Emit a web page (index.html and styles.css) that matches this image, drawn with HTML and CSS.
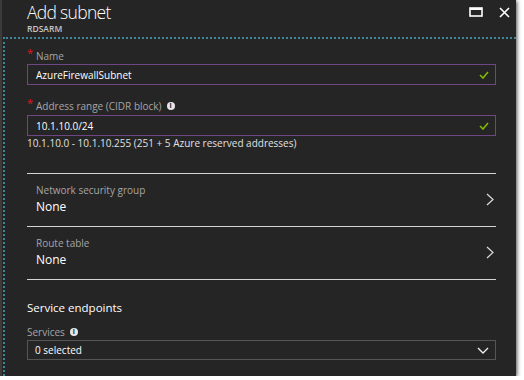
FILE: index.html
```html
<!DOCTYPE html>
<html lang="en">

<head>
    <meta charset="UTF-8">
    <link rel="stylesheet" href="styles.css">
</head>

<body>
    <div class="blade">
        <header class="blade-header">
            <div class="blade-titles">
                <h1 class="blade-title">Add subnet</h1>
                <div class="blade-subtitle">RDSARM</div>
            </div>
            <div class="blade-controls">
                <svg class="ctrl-icon" width="14" height="10" viewBox="0 0 14 10">
                    <rect x="1" y="1" width="12" height="8" fill="none" stroke="#fff" stroke-width="1.6"/>
                    <rect x="1" y="1" width="12" height="2" fill="#fff"/>
                </svg>
                <svg class="ctrl-icon" width="11" height="11" viewBox="0 0 11 11">
                    <path d="M1 1 L10 10 M10 1 L1 10" stroke="#fff" stroke-width="1.6"/>
                </svg>
            </div>
        </header>

        <div class="blade-body">
            <div class="field">
                <label class="field-label"><span class="required">*</span>Name</label>
                <div class="text-input is-valid">
                    <span>AzureFirewallSubnet</span>
                    <svg class="check" width="10" height="8" viewBox="0 0 10 8">
                        <path d="M1 4 L4 7 L9 1" fill="none" stroke="#7fba00" stroke-width="1.6"/>
                    </svg>
                </div>
            </div>

            <div class="field field-second">
                <label class="field-label"><span class="required">*</span>Address range (CIDR block)
                    <span class="info">i</span></label>
                <div class="text-input is-valid">
                    <span>10.1.10.0/24</span>
                    <svg class="check" width="10" height="8" viewBox="0 0 10 8">
                        <path d="M1 4 L4 7 L9 1" fill="none" stroke="#7fba00" stroke-width="1.6"/>
                    </svg>
                </div>
                <div class="field-hint">10.1.10.0 - 10.1.10.255 (251 + 5 Azure reserved addresses)</div>
            </div>

            <div class="picker-list">
                <div class="picker">
                    <div>
                        <div class="picker-label">Network security group</div>
                        <div class="picker-value">None</div>
                    </div>
                    <svg class="chevron" width="8" height="13" viewBox="0 0 8 13">
                        <path d="M1 1 L7 6.5 L1 12" fill="none" stroke="#ddd" stroke-width="1.2"/>
                    </svg>
                </div>
                <div class="picker">
                    <div>
                        <div class="picker-label">Route table</div>
                        <div class="picker-value">None</div>
                    </div>
                    <svg class="chevron" width="8" height="13" viewBox="0 0 8 13">
                        <path d="M1 1 L7 6.5 L1 12" fill="none" stroke="#ddd" stroke-width="1.2"/>
                    </svg>
                </div>
            </div>

            <h2 class="section-title">Service endpoints</h2>

            <div class="field">
                <label class="field-label field-label-plain">Services <span class="info">i</span></label>
                <div class="select-input">
                    <span>0 selected</span>
                    <svg class="caret" width="12" height="7" viewBox="0 0 12 7">
                        <path d="M1 1 L6 6 L11 1" fill="none" stroke="#eee" stroke-width="1.4"/>
                    </svg>
                </div>
            </div>
        </div>
    </div>
</body>

</html>
```

FILE: styles.css
```css
body {
    margin: 0;
    background-color: #fff;
    font-family: "Open Sans", "Noto Sans", sans-serif;
    color: #fff;
}

.blade {
    width: 516px;
    height: 376px;
    background-color: #252525;
    border-left: 2px solid #3b3b3b;
    box-sizing: border-box;
    box-shadow: 1px 1px 4px rgba(0, 0, 0, 0.7);
    display: flex;
    flex-direction: column;
}

.blade-header {
    height: 37px;
    display: flex;
    justify-content: space-between;
    padding: 0 6px 0 25px;
}

.blade-title {
    margin: 0;
    padding-top: 1px;
    font-size: 17.5px;
    font-weight: 300;
    letter-spacing: -0.7px;
    line-height: 23px;
}

.blade-subtitle {
    font-size: 8.5px;
    font-weight: 600;
    line-height: 9px;
    color: #c8c8c8;
}

.blade-controls {
    display: flex;
    gap: 16px;
    padding-top: 7px;
}

.blade-body {
    flex: 1;
    margin-left: 1px;
    border-left: 2px dotted #3d8799;
    border-top: 2px dotted #3d8799;
    padding: 10px 20px 0 22px;
}

.field-label {
    display: flex;
    align-items: center;
    font-size: 10px;
    line-height: 14px;
    color: #a6a6a6;
    margin-bottom: 1px;
}

.field-label-plain {
    margin-bottom: 1px;
}

.required {
    color: #e81123;
    font-size: 11px;
    width: 9px;
    margin-top: -6px;
}

.info {
    display: inline-flex;
    align-items: center;
    justify-content: center;
    width: 8px;
    height: 8px;
    margin-left: 5px;
    border-radius: 50%;
    background-color: #e6e6e6;
    color: #252525;
    font-size: 7px;
    font-weight: 700;
    line-height: 8px;
}

.field-second {
    margin-top: 14px;
}

.field-second .field-label {
    margin-bottom: 2px;
}

.text-input,
.select-input {
    height: 21px;
    box-sizing: border-box;
    display: flex;
    align-items: center;
    justify-content: space-between;
    padding: 0 6px 0 8px;
    font-size: 10px;
}

.text-input {
    border: 1px solid #6e4683;
}

.select-input {
    height: 20px;
    border: 1px solid #555;
    padding: 0 6px 0 7px;
}

.field-hint {
    font-size: 10px;
    line-height: 14px;
    color: #e0e0e0;
}

.picker-list {
    margin-top: 23px;
    border-top: 1px solid #d4d4d4;
}

.picker {
    display: flex;
    align-items: center;
    justify-content: space-between;
    padding: 9px 2px 11px 9px;
    border-bottom: 1px solid #d4d4d4;
}

.picker-label {
    font-size: 10px;
    line-height: 14px;
    color: #a6a6a6;
}

.picker-value {
    margin-top: 1px;
    font-size: 12px;
    line-height: 17px;
}

.section-title {
    margin: 19px 0 9px;
    font-size: 11.5px;
    font-weight: 400;
    line-height: 17px;
}
```
